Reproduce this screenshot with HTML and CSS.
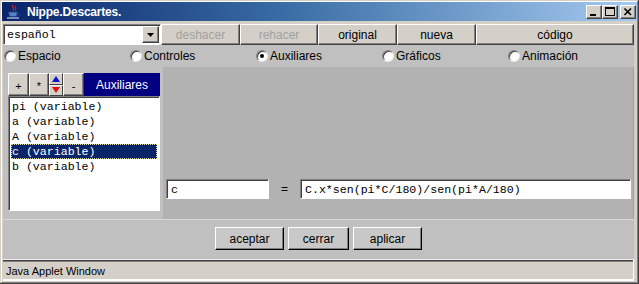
FILE: index.html
```html
<!DOCTYPE html>
<html lang="es">
<head>
<meta charset="utf-8">
<title>Nippe.Descartes.</title>
<link rel="stylesheet" href="styles.css">
</head>
<body>
<div class="window">
  <div class="titlebar">
    <svg class="app-icon" width="15" height="16" viewBox="0 0 15 16">
      <path d="M7 1 C5 3 9 4 7 6.5" stroke="#d02020" stroke-width="1.3" fill="none"/>
      <path d="M9.5 2 C8 3.5 11 4.5 9.2 6.5" stroke="#d02020" stroke-width="1.1" fill="none"/>
      <path d="M2.5 8 L11.5 8 L10.5 12.5 L3.5 12.5 Z" fill="#5a7fc0" stroke="#1e3c88" stroke-width="0.8"/>
      <path d="M11.5 9 C14 9 14 11.5 11 11.5" stroke="#1e3c88" stroke-width="1" fill="none"/>
      <path d="M1 14 L13 14" stroke="#c0d0f0" stroke-width="1.2"/>
    </svg>
    <span class="title">Nippe.Descartes.</span>
    <div class="wctl">
      <span class="wbtn"><svg width="14" height="12" viewBox="0 0 14 12"><rect x="3" y="8" width="6" height="2" fill="#000"/></svg></span>
      <span class="wbtn"><svg width="14" height="12" viewBox="0 0 14 12"><rect x="2.5" y="1.5" width="9" height="8" fill="none" stroke="#000"/><rect x="2" y="1" width="10" height="2" fill="#000"/></svg></span>
      <span class="wbtn wbtn-close"><svg width="14" height="12" viewBox="0 0 14 12"><path d="M3.5 2.5 L10 9 M10 2.5 L3.5 9" stroke="#000" stroke-width="1.6"/></svg></span>
    </div>
  </div>

  <div class="toprow">
    <div class="select">
      <span class="select-text">español</span>
      <span class="select-arrow"><svg width="7" height="4" viewBox="0 0 7 4"><path d="M0 0 L7 0 L3.5 4 Z" fill="#000"/></svg></span>
    </div>
    <div class="btn btn-off w79">deshacer</div>
    <div class="btn btn-off w78">rehacer</div>
    <div class="btn w79">original</div>
    <div class="btn w79">nueva</div>
    <div class="btn w158">código</div>
  </div>

  <div class="tabs">
    <div class="tab"><span class="radio"></span>Espacio</div>
    <div class="tab"><span class="radio"></span>Controles</div>
    <div class="tab"><span class="radio radio-on"></span>Auxiliares</div>
    <div class="tab"><span class="radio"></span>Gráficos</div>
    <div class="tab"><span class="radio"></span>Animación</div>
  </div>

  <div class="main">
    <div class="aux">
      <div class="aux-bar">
        <div class="tbtn w21">+</div>
        <div class="tbtn w20">*</div>
        <div class="arrows">
          <div class="arrow"><svg width="8" height="6" viewBox="0 0 8 6"><path d="M4 0 L8 6 L0 6 Z" fill="#1010d0"/></svg></div>
          <div class="arrow"><svg width="8" height="6" viewBox="0 0 8 6"><path d="M0 0 L8 0 L4 6 Z" fill="#e01010"/></svg></div>
        </div>
        <div class="tbtn w21">-</div>
        <div class="aux-label">Auxiliares</div>
      </div>
      <ul class="list">
        <li class="item">pi (variable)</li>
        <li class="item">a (variable)</li>
        <li class="item">A (variable)</li>
        <li class="item item-sel">c (variable)</li>
        <li class="item">b (variable)</li>
      </ul>
    </div>
    <div class="editor">
      <div class="field field-name">c</div>
      <div class="eq">=</div>
      <div class="field field-expr">C.x*sen(pi*C/180)/sen(pi*A/180)</div>
    </div>
  </div>

  <div class="actions">
    <div class="abtn w69">aceptar</div>
    <div class="abtn w61">cerrar</div>
    <div class="abtn w69b">aplicar</div>
  </div>

  <div class="status">Java Applet Window</div>
</div>
</body>
</html>
```

FILE: styles.css
```css
* { box-sizing: border-box; }
html, body { margin: 0; padding: 0; }
body {
  width: 639px;
  height: 284px;
  overflow: hidden;
  background: #d4d0c8;
  font-family: "Liberation Sans", Arial, sans-serif;
  font-size: 12px;
  color: #000;
}
.window {
  width: 639px;
  height: 284px;
  padding: 2px 2px 3px 2px;
  display: flex;
  flex-direction: column;
  background: #d4d0c8;
  box-shadow: inset -1px -1px #404040, inset 1px 1px #d4d0c8, inset -2px -2px #808080, inset 2px 2px #ffffff;
}

/* title bar */
.titlebar {
  height: 19px;
  flex: none;
  display: flex;
  align-items: center;
  padding-left: 4px;
  background: linear-gradient(to right, #0a246a 0%, #3a6ea5 45%, #a6caf0 100%);
}
.app-icon { flex: none; }
.title {
  margin-left: 6px;
  color: #fff;
  font-weight: bold;
  font-size: 12px;
  letter-spacing: -0.2px;
}
.wctl {
  margin-left: auto;
  margin-right: 0;
  display: flex;
  gap: 0;
}
.wbtn {
  width: 16px;
  height: 14px;
  background: #d4d0c8;
  border: 1px solid;
  border-color: #fff #404040 #404040 #fff;
  box-shadow: inset -1px -1px #808080;
  display: flex;
  align-items: center;
  justify-content: center;
}
.wbtn-close { margin-left: 2px; margin-right: 1px; }

/* top row */
.toprow {
  margin: 3px 3px 0 1px;
  height: 21px;
  flex: none;
  display: flex;
}
.select {
  width: 158px;
  height: 21px;
  margin-right: 0;
  background: #fff;
  border: 1px solid;
  border-color: #808080 #fff #fff #808080;
  box-shadow: inset 1px 1px #404040;
  display: flex;
  align-items: center;
  padding: 1px 1px 1px 3px;
}
.select-text {
  flex: 1;
  font-family: "Liberation Mono", "Courier New", monospace;
  font-size: 11.6px;
}
.select-arrow {
  width: 17px;
  height: 17px;
  background: #d4d0c8;
  border: 1px solid;
  border-color: #fff #404040 #404040 #fff;
  box-shadow: inset -1px -1px #808080;
  display: flex;
  align-items: center;
  justify-content: center;
}
.btn {
  height: 21px;
  background: #d4d0c8;
  border: 1px solid;
  border-color: #fff #404040 #404040 #fff;
  box-shadow: inset -1px -1px #808080;
  display: flex;
  align-items: center;
  justify-content: center;
  font-size: 12px;
}
.btn-off { color: #a0a0a0; }
.w79 { width: 79px; }
.w78 { width: 78px; }
.w158 { width: 158px; }
.toprow .btn:first-of-type { margin-left: 3px; }

/* tabs */
.tabs {
  margin: 0 3px 0 1px;
  height: 22px;
  flex: none;
  display: flex;
  background: #c0c0c0;
  padding-left: 1px;
}
.tab {
  width: 126px;
  display: flex;
  align-items: center;
  padding-top: 0;
}
.radio {
  width: 12px;
  height: 12px;
  margin-right: 2px;
  border-radius: 50%;
  background: #fff;
  border: 1px solid;
  border-color: #808080 #e8e8e8 #e8e8e8 #808080;
  box-shadow: inset 1px 1px #404040;
  display: flex;
  align-items: center;
  justify-content: center;
}
.radio-on::after {
  content: "";
  width: 4px;
  height: 4px;
  border-radius: 50%;
  background: #000;
}

/* main */
.main {
  margin: 0 3px 0 1px;
  height: 152px;
  flex: none;
  display: flex;
  background: #b2b2b2;
  border-right: 1px solid #a0a0a0;
}
.aux {
  width: 160px;
  background: #c0c0c0;
  padding: 6px 0 8px 5px;
  display: flex;
  flex-direction: column;
}
.aux-bar {
  height: 23px;
  display: flex;
}
.tbtn {
  height: 23px;
  background: #d4d0c8;
  border: 1px solid;
  border-color: #fff #404040 #404040 #fff;
  box-shadow: inset -1px -1px #808080;
  display: flex;
  align-items: flex-end;
  justify-content: center;
  padding-bottom: 3px;
  font-size: 11px;
}
.w21 { width: 21px; }
.w20 { width: 20px; }
.arrows {
  width: 14px;
  display: flex;
  flex-direction: column;
}
.arrow {
  height: 11.5px;
  background: #d4d0c8;
  border: 1px solid;
  border-color: #fff #404040 #404040 #fff;
  display: flex;
  align-items: center;
  justify-content: center;
}
.aux-label {
  width: 76px;
  background: #000080;
  color: #fff;
  display: flex;
  align-items: center;
  justify-content: center;
  font-size: 12px;
}
.list {
  list-style: none;
  margin: 0;
  width: 152px;
  height: 115px;
  background: #fff;
  border: 1px solid;
  border-color: #808080 #fff #fff #808080;
  box-shadow: inset 1px 1px #404040;
  padding: 2px 2px;
  font-family: "Liberation Mono", "Courier New", monospace;
  font-size: 11.6px;
}
.item {
  height: 15px;
  line-height: 15px;
  padding-left: 1px;
  white-space: pre;
}
.item-sel {
  background: #0a246a;
  color: #fff;
  outline: 1px dotted #d8d8a0;
  outline-offset: -1px;
}
.editor {
  flex: 1;
  display: flex;
  align-items: flex-end;
  padding: 0 2px 20px 3px;
}
.field {
  height: 20px;
  background: #fff;
  border: 1px solid;
  border-color: #808080 #fff #fff #808080;
  box-shadow: inset 1px 1px #404040;
  display: flex;
  align-items: center;
  padding-left: 4px;
  font-family: "Liberation Mono", "Courier New", monospace;
  font-size: 11.6px;
}
.field-name { width: 103px; }
.eq {
  width: 31px;
  height: 20px;
  display: flex;
  align-items: center;
  justify-content: center;
  font-size: 12px;
}
.field-expr { flex: 1; }

/* actions */
.actions {
  margin: 0 3px 0 1px;
  height: 40px;
  flex: none;
  background: #c0c0c0;
  border-top: 1px solid #d8d8d8;
  display: flex;
  justify-content: center;
  align-items: flex-start;
  padding-top: 7px;
  gap: 4px;
}
.abtn {
  height: 23px;
  background: #c8c8c8;
  border: 1px solid;
  border-color: #fff #000 #000 #fff;
  box-shadow: inset -1px -1px #808080;
  display: flex;
  align-items: center;
  justify-content: center;
  font-size: 12px;
}
.w69 { width: 69px; }
.w61 { width: 61px; }
.w69b { width: 69px; }

/* status */
.status {
  margin: 0 3px 0 1px;
  height: 22px;
  flex: none;
  background: #d4d0c8;
  border-top: 1px solid #f0f0f0;
  border-bottom: 2px solid #fff;
  border-right: 1px solid #fff;
  box-shadow: inset 0 1px #404040, inset 0 2px #808080;
  display: flex;
  align-items: center;
  padding: 2px 0 0 3px;
  font-size: 11px;
}
```
